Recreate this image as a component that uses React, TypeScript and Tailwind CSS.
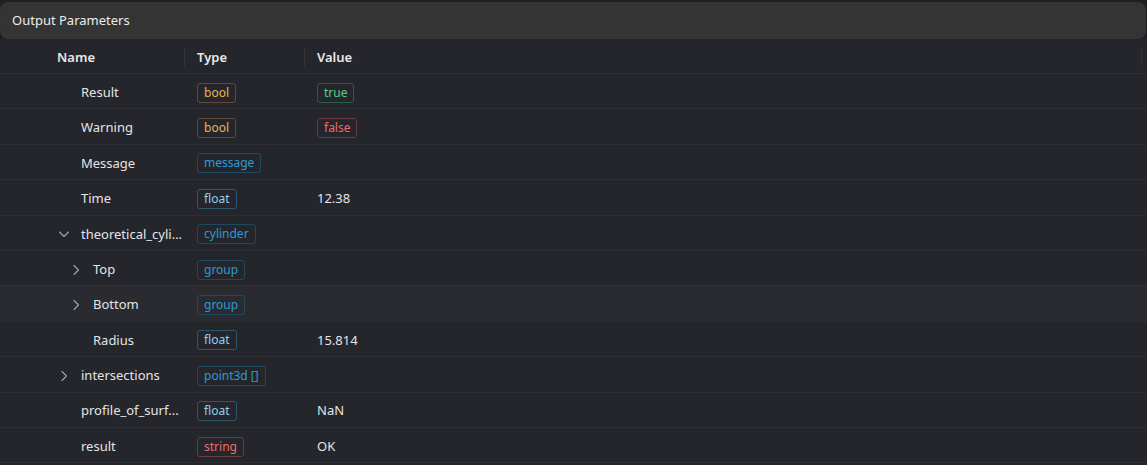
import { ReactNode } from "react";

type Tone = "amber" | "green" | "red" | "blue" | "sky";

const badgeTone: Record<Tone, string> = {
  amber: "border-[#5e4c36] text-[#e9b25a]",
  green: "border-[#2d5c4a] text-[#4fd08a]",
  red: "border-[#6a3a3c] text-[#ee6b6b]",
  blue: "border-[#1d4a60] text-[#2a9bd4]",
  sky: "border-[#2f566a] text-[#8fd0f2]",
};

type Row = {
  name: string;
  level: 0 | 1;
  chevron?: "open" | "closed";
  type: string;
  typeTone: Tone;
  value?: ReactNode;
  hover?: boolean;
};

const rows: Row[] = [
  { name: "Result", level: 0, type: "bool", typeTone: "amber", value: <Badge tone="green">true</Badge> },
  { name: "Warning", level: 0, type: "bool", typeTone: "amber", value: <Badge tone="red">false</Badge> },
  { name: "Message", level: 0, type: "message", typeTone: "blue" },
  { name: "Time", level: 0, type: "float", typeTone: "sky", value: "12.38" },
  { name: "theoretical_cyli...", level: 0, chevron: "open", type: "cylinder", typeTone: "blue" },
  { name: "Top", level: 1, chevron: "closed", type: "group", typeTone: "blue" },
  { name: "Bottom", level: 1, chevron: "closed", type: "group", typeTone: "blue", hover: true },
  { name: "Radius", level: 1, type: "float", typeTone: "sky", value: "15.814" },
  { name: "intersections", level: 0, chevron: "closed", type: "point3d []", typeTone: "blue" },
  { name: "profile_of_surf...", level: 0, type: "float", typeTone: "sky", value: "NaN" },
  { name: "result", level: 0, type: "string", typeTone: "red", value: "OK" },
];

function Badge({ tone, children }: { tone: Tone; children: ReactNode }) {
  return (
    <span
      className={`inline-flex items-center h-[20px] px-[6px] rounded-[3px] border text-[12px] leading-none ${badgeTone[tone]}`}
    >
      {children}
    </span>
  );
}

function Chevron({ open }: { open: boolean }) {
  return (
    <svg width="14" height="14" viewBox="0 0 14 14" fill="none" stroke="#a0a2a8" strokeWidth="1.1" strokeLinecap="round" strokeLinejoin="round">
      {open ? <polyline points="2.5 5 7 9.5 11.5 5" /> : <polyline points="5 2.5 9.5 7 5 11.5" />}
    </svg>
  );
}

export default function App() {
  return (
    <div
      className="w-[1147px] h-[465px] overflow-hidden bg-[#1f1f23] pt-[2px] text-[13px] text-[#e4e4e6]"
      style={{ fontFamily: '"Noto Sans", "Open Sans", Arial, sans-serif' }}
    >
      <div className="h-[37px] mr-[1px] flex items-center pl-[12px] bg-[#343434] rounded-[8px] text-[13px] text-[#ececec]">
        Output Parameters
      </div>

      <div className="bg-[#25262b] h-full">
        <div className="grid grid-cols-[184px_120px_1fr] h-[35px] items-center border-b border-[#2d2e33] font-semibold text-[#e8e8ea]">
          <div className="pl-[57px] pt-[3px] h-full flex items-center">Name</div>
          <div className="h-full flex items-center relative pl-[13px] pt-[3px]">
            <span className="absolute left-0 top-[9px] h-[18px] w-[1px] bg-[#34353a]" />
            Type
          </div>
          <div className="h-full flex items-center relative pl-[13px] pt-[3px]">
            <span className="absolute left-0 top-[9px] h-[18px] w-[1px] bg-[#34353a]" />
            Value
            <span className="absolute right-[5px] top-[9px] h-[18px] w-[1px] bg-[#34353a]" />
          </div>
        </div>

        {rows.map((r) => (
          <div
            key={r.name}
            className={`grid grid-cols-[184px_120px_1fr] h-[35.4px] pt-[3px] items-center border-b border-[#2d2e33] ${
              r.hover ? "bg-[#2a2b30]" : ""
            }`}
          >
            <div className={`flex items-center ${r.level === 0 ? "pl-[57px]" : "pl-[69px]"}`}>
              <span className="w-[24px] flex items-center">
                {r.chevron && <Chevron open={r.chevron === "open"} />}
              </span>
              <span className="whitespace-nowrap">{r.name}</span>
            </div>
            <div className="pl-[13px] flex items-center">
              <Badge tone={r.typeTone}>{r.type}</Badge>
            </div>
            <div className="pl-[13px] flex items-center">{r.value}</div>
          </div>
        ))}
      </div>
    </div>
  );
}
